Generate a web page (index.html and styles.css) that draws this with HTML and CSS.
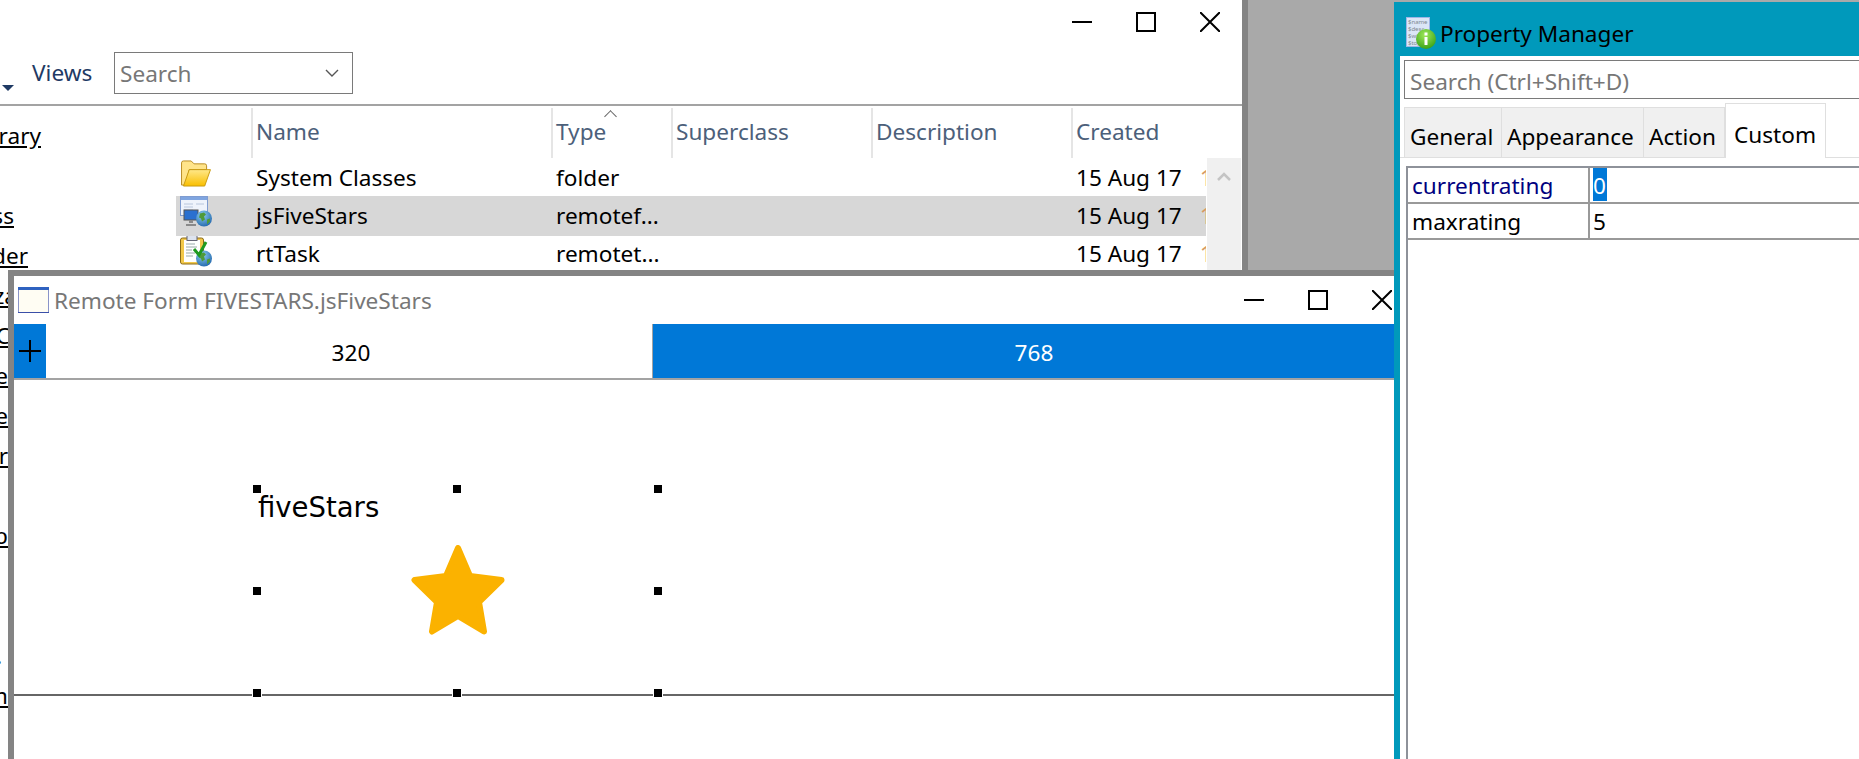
FILE: index.html
```html
<!DOCTYPE html>
<html lang="en">
<head>
<meta charset="utf-8">
<title>Remote Form</title>
<link rel="stylesheet" href="styles.css">
</head>
<body>
<svg class="defs" width="0" height="0">
  <defs>
    <linearGradient id="fold" x1="0" y1="0" x2="0" y2="1"><stop offset="0" stop-color="#ffe88a"/><stop offset="1" stop-color="#f9bf00"/></linearGradient>
    <radialGradient id="globe" cx=".4" cy=".3" r=".8"><stop offset="0" stop-color="#8fd0f0"/><stop offset="1" stop-color="#1a5fa8"/></radialGradient>
    <radialGradient id="info" cx=".45" cy=".3" r=".8"><stop offset="0" stop-color="#9fe85a"/><stop offset="1" stop-color="#2d9a10"/></radialGradient>
    <symbol id="earth" viewBox="0 0 16 16">
      <circle cx="8" cy="8" r="8" fill="url(#globe)"/>
      <path d="M4 3l4-1 2 2-2 2 1 3-3 2-1-3-2-1zM11 9l3-1 0 3-3 3z" fill="#4f9a3a"/>
    </symbol>
  </defs>
</svg>

<section class="win back">
  <div class="back-top">
    <div class="controls">
      <svg class="ctl" viewBox="0 0 20 20"><path d="M0 10h20" /></svg>
      <svg class="ctl" viewBox="0 0 20 20"><path d="M1 1h18v18H1z" /></svg>
      <svg class="ctl" viewBox="0 0 20 20"><path d="M0 0l20 20M20 0L0 20" /></svg>
    </div>
    <div class="toolbar">
      <span class="caret"></span>
      <span class="views">Views</span>
      <div class="search-drop">
        <span>Search</span>
        <svg class="chev" viewBox="0 0 14 8"><path d="M1 1l6 6 6-6"/></svg>
      </div>
    </div>
  </div>
  <div class="back-body">
    <nav class="tree">
      <a class="w41">Library</a>
      <a class="w41 blank">&nbsp;</a>
      <a class="w14">Class</a>
      <a class="w28">Folder</a>
      <a class="w17">Organiza</a>
      <a class="w10">PC</a>
      <a class="w8">Code</a>
      <a class="w8">Table</a>
      <a class="w8">User</a>
      <a class="w8 blank">&nbsp;</a>
      <a class="w8">Web</a>
      <a class="w8 blank">&nbsp;</a>
      <a class="w8 blank">&nbsp;</a>
      <a class="w2 blank">.</a>
      <a class="w8">Form</a>
    </nav>
    <div class="list">
      <div class="cols head">
        <span></span>
        <span class="hc">Name</span>
        <span class="hc sorted">Type</span>
        <span class="hc">Superclass</span>
        <span class="hc">Description</span>
        <span class="hc">Created</span>
      </div>
      <div class="rows-wrap">
        <div class="rows">
          <div class="cols row r1">
            <svg class="ico" viewBox="0 0 32 28"><path d="M1 26V3q0-2 2-2h8l3 3h11q2 0 2 2v4H9L5 26z" fill="#ffe48a" stroke="#b88a20"/><path d="M3 27L9 10h22l-6 17z" fill="url(#fold)" stroke="#c89a10"/></svg>
            <span class="c">System Classes</span><span class="c">folder</span><span></span><span></span><span class="c date">15 Aug 17<i>12:01</i></span>
          </div>
          <div class="cols row sel">
            <svg class="ico" viewBox="0 0 32 32"><rect x="0.5" y="0.5" width="27" height="19" fill="#eef3fb" stroke="#7f9cd0"/><rect x="1" y="1" width="26" height="3" fill="#7fa5e0"/><path d="M4 8h9M4 11h9M4 14h9M16 8h8" stroke="#b8c6dc"/><rect x="4" y="14" width="14" height="10" fill="#2a70d0" stroke="#555"/><path d="M9 24h4v3H9zM6 28h10v2H6z" fill="#8a8a8a"/><use href="#earth" x="16" y="14" width="16" height="17"/></svg>
            <span class="c">jsFiveStars</span><span class="c">remotef...</span><span></span><span></span><span class="c date">15 Aug 17<i>12:01</i></span>
          </div>
          <div class="cols row r3">
            <svg class="ico" viewBox="0 0 32 32"><rect x="0.5" y="3" width="23" height="26" rx="2" fill="#f2c84a" stroke="#8a6a18"/><rect x="4" y="5" width="16" height="22" fill="#fff"/><rect x="7" y="0.5" width="10" height="5" fill="#dde3ee" stroke="#667"/><path d="M6 9h9M6 12h11M6 15h6M6 18h9M6 21h7" stroke="#9aa"/><use href="#earth" x="16" y="15" width="16" height="17"/><path d="M14 14l5 6 7-13" fill="none" stroke="#1f9a20" stroke-width="3"/></svg>
            <span class="c">rtTask</span><span class="c">remotet...</span><span></span><span></span><span class="c date">15 Aug 17<i>12:01</i></span>
          </div>
        </div>
        <div class="vscroll"><svg class="sc-up" viewBox="0 0 14 9"><path d="M1 8l6-6 6 6"/></svg></div>
      </div>
    </div>
  </div>
</section>

<section class="win front">
  <header class="ftitle">
    <svg class="fico" viewBox="0 0 31 26"><rect x="0.5" y="0.5" width="30" height="25" fill="#fffdf3" stroke="#8a94c8"/><rect x="0" y="0" width="31" height="3" fill="#2f62c0"/><path d="M0 25.5h31" stroke="#3a4fa8"/></svg>
    <span class="ftext">Remote Form FIVESTARS.jsFiveStars</span>
    <div class="controls small">
      <svg class="ctl" viewBox="0 0 20 20"><path d="M0 10h20" /></svg>
      <svg class="ctl" viewBox="0 0 20 20"><path d="M1 1h18v18H1z" /></svg>
      <svg class="ctl" viewBox="0 0 20 20"><path d="M0 0l20 20M20 0L0 20" /></svg>
    </div>
  </header>
  <div class="bps">
    <div class="plus"><svg viewBox="0 0 22 22"><path d="M0 11h22M11 0v22"/></svg></div>
    <div class="bp off">320</div>
    <div class="bp on">768</div>
  </div>
  <div class="canvas">
    <div class="guide"></div>
    <div class="selection">
      <span class="comp">fiveStars</span>
      <svg class="star" viewBox="0 0 94 90"><polygon points="47,3 59,31 90.5,35 68,57 73,86.5 47,71 21,86.5 26,57 3.5,35 35,31"/></svg>
      <i class="h tl"></i><i class="h tc"></i><i class="h tr"></i>
      <i class="h ml"></i><i class="h mr"></i>
      <i class="h bl"></i><i class="h bc"></i><i class="h br"></i>
    </div>
  </div>
</section>

<aside class="win props">
  <header class="ptitle">
    <svg class="pico" viewBox="0 0 31 32">
      <rect x="0.5" y="0.5" width="23" height="29" fill="#dbe6f6" stroke="#9db6e6"/>
      <text x="2" y="7" class="tiny">$name</text>
      <text x="2" y="14" class="tiny">$desc</text>
      <text x="2" y="21" class="tiny">$wid</text>
      <text x="2" y="28" class="tiny">$top</text>
      <circle cx="20" cy="22" r="10" fill="url(#info)"/>
      <path d="M18.5 20h3v8h-3zM18.5 15.500h3v3h-3z" fill="#fff"/>
    </svg>
    <span>Property Manager</span>
  </header>
  <div class="pbody">
    <div class="psearch">Search (Ctrl+Shift+D)</div>
    <div class="tabs">
      <span class="tab t1">General</span>
      <span class="tab t2">Appearance</span>
      <span class="tab t3">Action</span>
      <span class="tab active">Custom</span>
    </div>
    <div class="ptable">
      <div class="prow"><span class="pk link">currentrating</span><span class="pv"><b class="selected">0</b></span></div>
      <div class="prow"><span class="pk">maxrating</span><span class="pv">5</span></div>
    </div>
  </div>
</aside>
</body>
</html>
```

FILE: styles.css
```css
* { box-sizing: border-box; }
html, body { margin: 0; height: 759px; overflow: hidden; }
body {
  position: relative;
  background: #a9a9a9;
  font-family: "Noto Sans", "Open Sans", sans-serif;
  font-size: 22.600px;
  color: #000;
}
.defs { position: absolute; }
.win { position: absolute; overflow: hidden; }

/* back window */
.back {
  left: 0; top: 0;
  width: 1248px; height: 759px;
  background: #fff;
  border-right: 6px solid #848484;
}
.back-top { height: 104px; position: relative; border-bottom: 0; }
.controls { position: absolute; top: 12px; right: 22px; display: flex; gap: 44px; }
.ctl { width: 20px; height: 20px; display: block; fill: none; stroke: #000; stroke-width: 2; }
.toolbar { position: absolute; left: 0; top: 52px; height: 42px; display: flex; align-items: center; }
.caret {
  width: 0; height: 0; margin: 30px 18px 0 2px;
  border-left: 6px solid transparent; border-right: 6px solid transparent;
  border-top: 6px solid #1f3a64;
}
.views { color: #1f3a64; width: 82px; line-height: 44px; }
.search-drop {
  width: 239px; height: 42px;
  border: 1.5px solid #7a7a7a;
  padding: 0 13px 0 5px;
  display: flex; align-items: center; justify-content: space-between;
  color: #777;
}
.chev { width: 14px; height: 8px; fill: none; stroke: #555; stroke-width: 1.4; }
.back-body { display: flex; border-top: 2px solid #a3a3a3; height: 655px; }
.tree { width: 176px; flex: none; padding-top: 10px; display: flex; flex-direction: column; }
.tree a {
  height: 40px; line-height: 40px;
  display: flex; justify-content: flex-end;
  white-space: nowrap;
  text-decoration: underline;
  color: #000;
}
.tree a.blank { text-decoration: none; }
.w41 { width: 41px; }
.w28 { width: 28px; }
.w17 { width: 17px; }
.w14 { width: 14px; }
.w10 { width: 10px; }
.w8 { width: 8px; }
.w2 { width: 2px; }
.list { flex: 1; min-width: 0; }
.cols { display: grid; grid-template-columns: 75px 300px 120px 200px 200px 1fr; align-items: center; }
.head { height: 52px; color: #4c607a; }
.hc {
  height: 50px; margin-top: 2px;
  line-height: 48px;
  padding-left: 3px;
  border-left: 2px solid #e5e5e5;
  position: relative;
}
.sorted::before {
  content: "";
  position: absolute; left: 53px; top: 4px;
  width: 8px; height: 8px;
  border-left: 1px solid #666; border-top: 1px solid #666;
  transform: rotate(45deg);
}
.rows-wrap { display: flex; }
.rows { width: 1030px; margin-right: 1px; overflow: hidden; flex: none; }
.row { height: 38px; white-space: nowrap; overflow: hidden; }
.sel { height: 40px; background: #d7d7d7; padding-bottom: 2px; }
.r3 { padding-bottom: 3px; }
.ico { width: 32px; height: 32px; margin-left: 4px; display: block; }
.r1 .ico { height: 27px; margin-top: -8px; }
.sel .ico { margin-top: -6px; }
.r3 .ico { margin-top: -5px; }
.c { padding-left: 5px; }
.date { display: flex; }
.date i { font-style: normal; color: #d89a62; margin-left: 18px; }
.vscroll { width: 34px; height: 112px; background: #f0f0f0; position: relative; padding: 14px 0 0 10px; }
.sc-up { width: 14px; height: 9px; fill: none; stroke: #c4c4c4; stroke-width: 2.500; display: block; }

/* front window */
.front {
  left: 8px; top: 270px;
  width: 1386px; height: 489px;
  background: #fff;
  border-left: 6px solid #848484;
  border-top: 6px solid #848484;
  display: flex; flex-direction: column;
}
.ftitle { height: 48px; flex: none; display: flex; align-items: center; position: relative; padding-left: 4px; }
.fico { width: 31px; height: 26px; margin-right: 5px; }
.ftext { color: #777; }
.controls.small { top: 14px; right: 2px; }
.bps { height: 56px; flex: none; display: flex; border-bottom: 2px solid #a3a3a3; }
.plus { width: 32px; background: #0078d7; display: flex; align-items: center; justify-content: center; }
.plus svg { width: 22px; height: 22px; fill: none; stroke: #000; stroke-width: 2; }
.bp { display: flex; align-items: center; justify-content: center; padding-top: 3px; }
.bp.off { width: 607px; border-right: 1px solid #a3a3a3; padding-left: 4px; }
.bp.on { flex: 1; background: #0078d7; color: #fff; padding-left: 21px; }
.canvas { flex: 1; position: relative; }
.guide { position: absolute; left: 0; right: 0; top: 314px; height: 2px; background: #666; }
.selection { position: absolute; left: 243px; top: 109px; width: 401px; height: 204px; }
.comp { position: absolute; left: 1px; top: 2px; font-family: "DejaVu Sans", sans-serif; font-size: 27.500px; line-height: 32px; }
.star { position: absolute; left: 154px; top: 56px; width: 94px; height: 90px; fill: #fbb200; stroke: #fbb200; stroke-width: 6; stroke-linejoin: round; }
.h { position: absolute; width: 8px; height: 8px; background: #000; box-shadow: 0 0 0 1px #fff; margin: -4px 0 0 -4px; }
.tl, .tc, .tr { top: 0; }
.ml, .mr { top: 102px; }
.bl, .bc, .br { top: 204px; }
.tl, .ml, .bl { left: 0; }
.tc, .bc { left: 200px; }
.tr, .mr, .br { left: 401px; }

/* property manager */
.props {
  left: 1394px; top: 2px;
  width: 465px; height: 757px;
  background: #0099bb;
  padding-left: 6px;
  display: flex; flex-direction: column;
}
.ptitle { height: 54px; flex: none; display: flex; align-items: center; gap: 3px; padding: 8px 0 0 6px; }
.pico { width: 31px; height: 32px; margin-top: 0; }
.tiny { font-size: 6px; fill: #808890; }
.pbody { flex: 1; background: #fff; padding-top: 4px; display: flex; flex-direction: column; }
.psearch {
  height: 39px; flex: none;
  margin-left: 4px; margin-right: -4px;
  border: 1.5px solid #7a7a7a;
  padding-left: 5px; line-height: 42px;
  color: #777;
}
.tabs { height: 54px; margin-top: 5px; flex: none; display: flex; align-items: flex-end; padding-left: 4px; border-bottom: 1px solid #dfdfdf; }
.tab { height: 50px; background: #f0f0f0; border: 1px solid #dfdfdf; border-width: 1px 1px 0 0; line-height: 57px; padding-left: 5px; }
.t1 { width: 98px; border-left-width: 1px; }
.t2 { width: 142px; }
.t3 { width: 81px; }
.active { width: 101px; height: 55px; margin-bottom: -1px; background: #fff; border-width: 1px 1px 0 1px; padding-left: 8px; line-height: 62px; }
.ptable { margin: 8px 0 0 6px; flex: 1; border-left: 2px solid #8e929a; border-top: 2px solid #8e929a; }
.prow { height: 36px; display: flex; border-bottom: 2px solid #999; }
.pk { width: 182px; padding-left: 4px; border-right: 2px solid #999; line-height: 36px; }
.link { color: #000080; }
.pv { padding-left: 3px; line-height: 36px; }
.selected { display: block; font-weight: 400; background: #0078d7; color: #fff; width: 14px; height: 33px; }
```
